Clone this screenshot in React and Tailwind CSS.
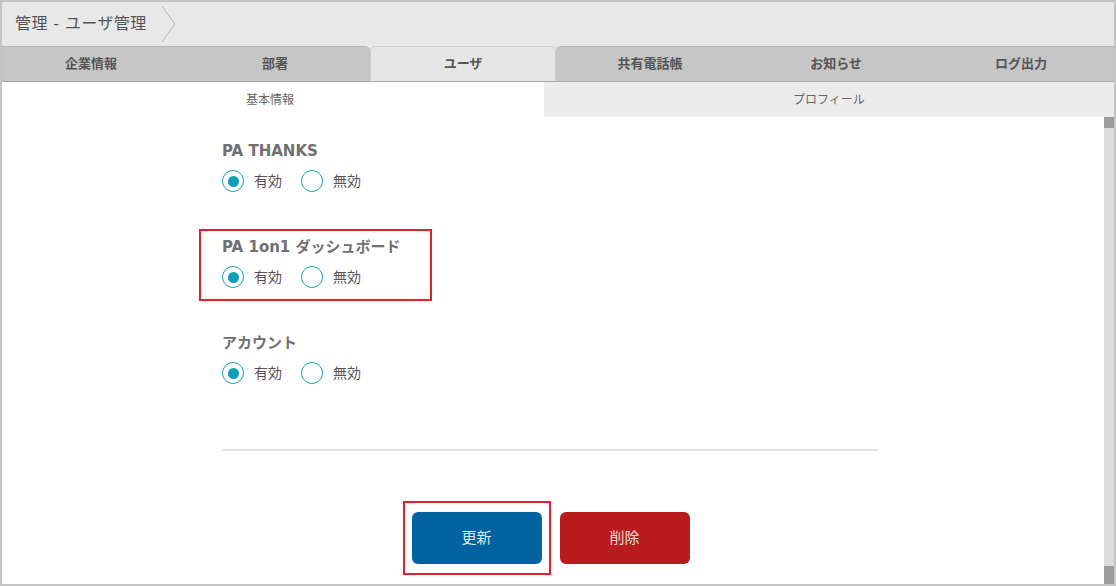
import React from 'react';

const font = { fontFamily: '"DejaVu Sans", "Noto Sans CJK JP", sans-serif' };

function Radio({ checked, label }) {
  return (
    <label className="flex items-center gap-[10px]">
      <span className="w-[22px] h-[22px] rounded-full border-[1.5px] border-[#1a9fbd] bg-white flex items-center justify-center">
        {checked && <span className="w-[11px] h-[11px] rounded-full bg-[#0f9bb9]" />}
      </span>
      <span className="text-[14px] text-[#555] leading-[24px]">{label}</span>
    </label>
  );
}

function Section({ title, highlight }) {
  return (
    <div
      className={`w-[233px] h-[72px] border-2 pl-[21px] pt-[5px] ${
        highlight ? 'border-[#e0202a]' : 'border-transparent'
      }`}
    >
      <div className="text-[15px] font-bold text-[#707070] leading-[22px] whitespace-nowrap">{title}</div>
      <div className="flex items-center gap-[19px] mt-[7px] h-[24px]">
        <Radio checked label="有効" />
        <Radio label="無効" />
      </div>
    </div>
  );
}

export default function App() {
  const leftTabs = [
    { name: '企業情報', w: 'w-[178px]' },
    { name: '部署', w: 'w-[190px]' },
  ];
  const rightTabs = [
    { name: '共有電話帳', w: 'w-[188px]' },
    { name: 'お知らせ', w: 'w-[184px]' },
    { name: 'ログ出力', w: 'w-[186px]' },
  ];

  return (
    <div style={font} className="w-[1116px] h-[586px] border-2 border-[#c4c4c4] bg-white flex flex-col overflow-hidden">
      {/* breadcrumb */}
      <div className="h-[44px] bg-[#e8e8e8] flex items-center pl-[13px] shrink-0">
        <span className="text-[16px] text-[#555] leading-none tracking-[0.4px]">管理 - ユーザ管理</span>
        <svg width="16" height="38" viewBox="0 0 16 38" className="ml-[14px]">
          <path d="M1 1 L14 19 L1 37" fill="none" stroke="#b8b8b8" strokeWidth="1" />
        </svg>
      </div>

      {/* main tabs */}
      <div className="h-[36px] bg-[#e8e8e8] flex items-end shrink-0 border-b border-[#a9a9a9]">
        <div className="flex h-[35px] bg-[#c6c6c6] rounded-tr-[5px] border-t border-[#b5b5b5]">
          {leftTabs.map((t) => (
            <div key={t.name} className={`${t.w} flex items-center justify-center text-[13px] font-bold text-[#555]`}>
              {t.name}
            </div>
          ))}
        </div>
        <div className="w-[186px] h-[35px] bg-[#e6e6e6] rounded-t-[5px] border-t border-x border-[#d0d0d0] flex items-center justify-center text-[13px] font-bold text-[#555]">
          ユーザ
        </div>
        <div className="flex h-[35px] bg-[#c6c6c6] rounded-tl-[5px] border-t border-[#b5b5b5] flex-1">
          {rightTabs.map((t) => (
            <div key={t.name} className={`${t.w} flex items-center justify-center text-[13px] font-bold text-[#555]`}>
              {t.name}
            </div>
          ))}
        </div>
      </div>

      {/* sub tabs */}
      <div className="h-[35px] flex shrink-0">
        <div className="w-[542px] bg-white flex items-center justify-center text-[12px] text-[#666] pr-[6px]">基本情報</div>
        <div className="flex-1 bg-[#ececec] flex items-center justify-center text-[12px] text-[#666]">プロフィール</div>
      </div>

      {/* content */}
      <div className="flex-1 flex min-h-0">
        <div className="flex-1 bg-white pl-[197px] pt-[16px]">
          <div className="flex flex-col gap-[24px]">
            <Section title="PA THANKS" />
            <Section title="PA 1on1 ダッシュボード" highlight />
            <Section title="アカウント" />
          </div>
          <div className="ml-[23px] w-[656px] h-[2px] bg-[#e2e2e2] mt-[52px]" />
          <div className="ml-[23px] w-[656px] flex justify-center gap-[9px] mt-[50px] pr-[8px]">
            <div className="border-2 border-[#e0202a] px-[7px] py-[9px]">
              <button className="w-[130px] h-[52px] rounded-[6px] bg-[#0062a0] text-[15px] text-[#dce8f2]">
                更新
              </button>
            </div>
            <div className="py-[11px]">
              <button className="w-[130px] h-[52px] rounded-[6px] bg-[#b81c1c] text-[15px] text-[#f3dada]">
                削除
              </button>
            </div>
          </div>
        </div>
        <div className="w-[10px] bg-[#dcdcdc] flex flex-col justify-between">
          <div className="h-[11px] bg-[#9b9b9b]" />
          <div className="h-[18px] bg-[#9b9b9b]" />
        </div>
      </div>
    </div>
  );
}
